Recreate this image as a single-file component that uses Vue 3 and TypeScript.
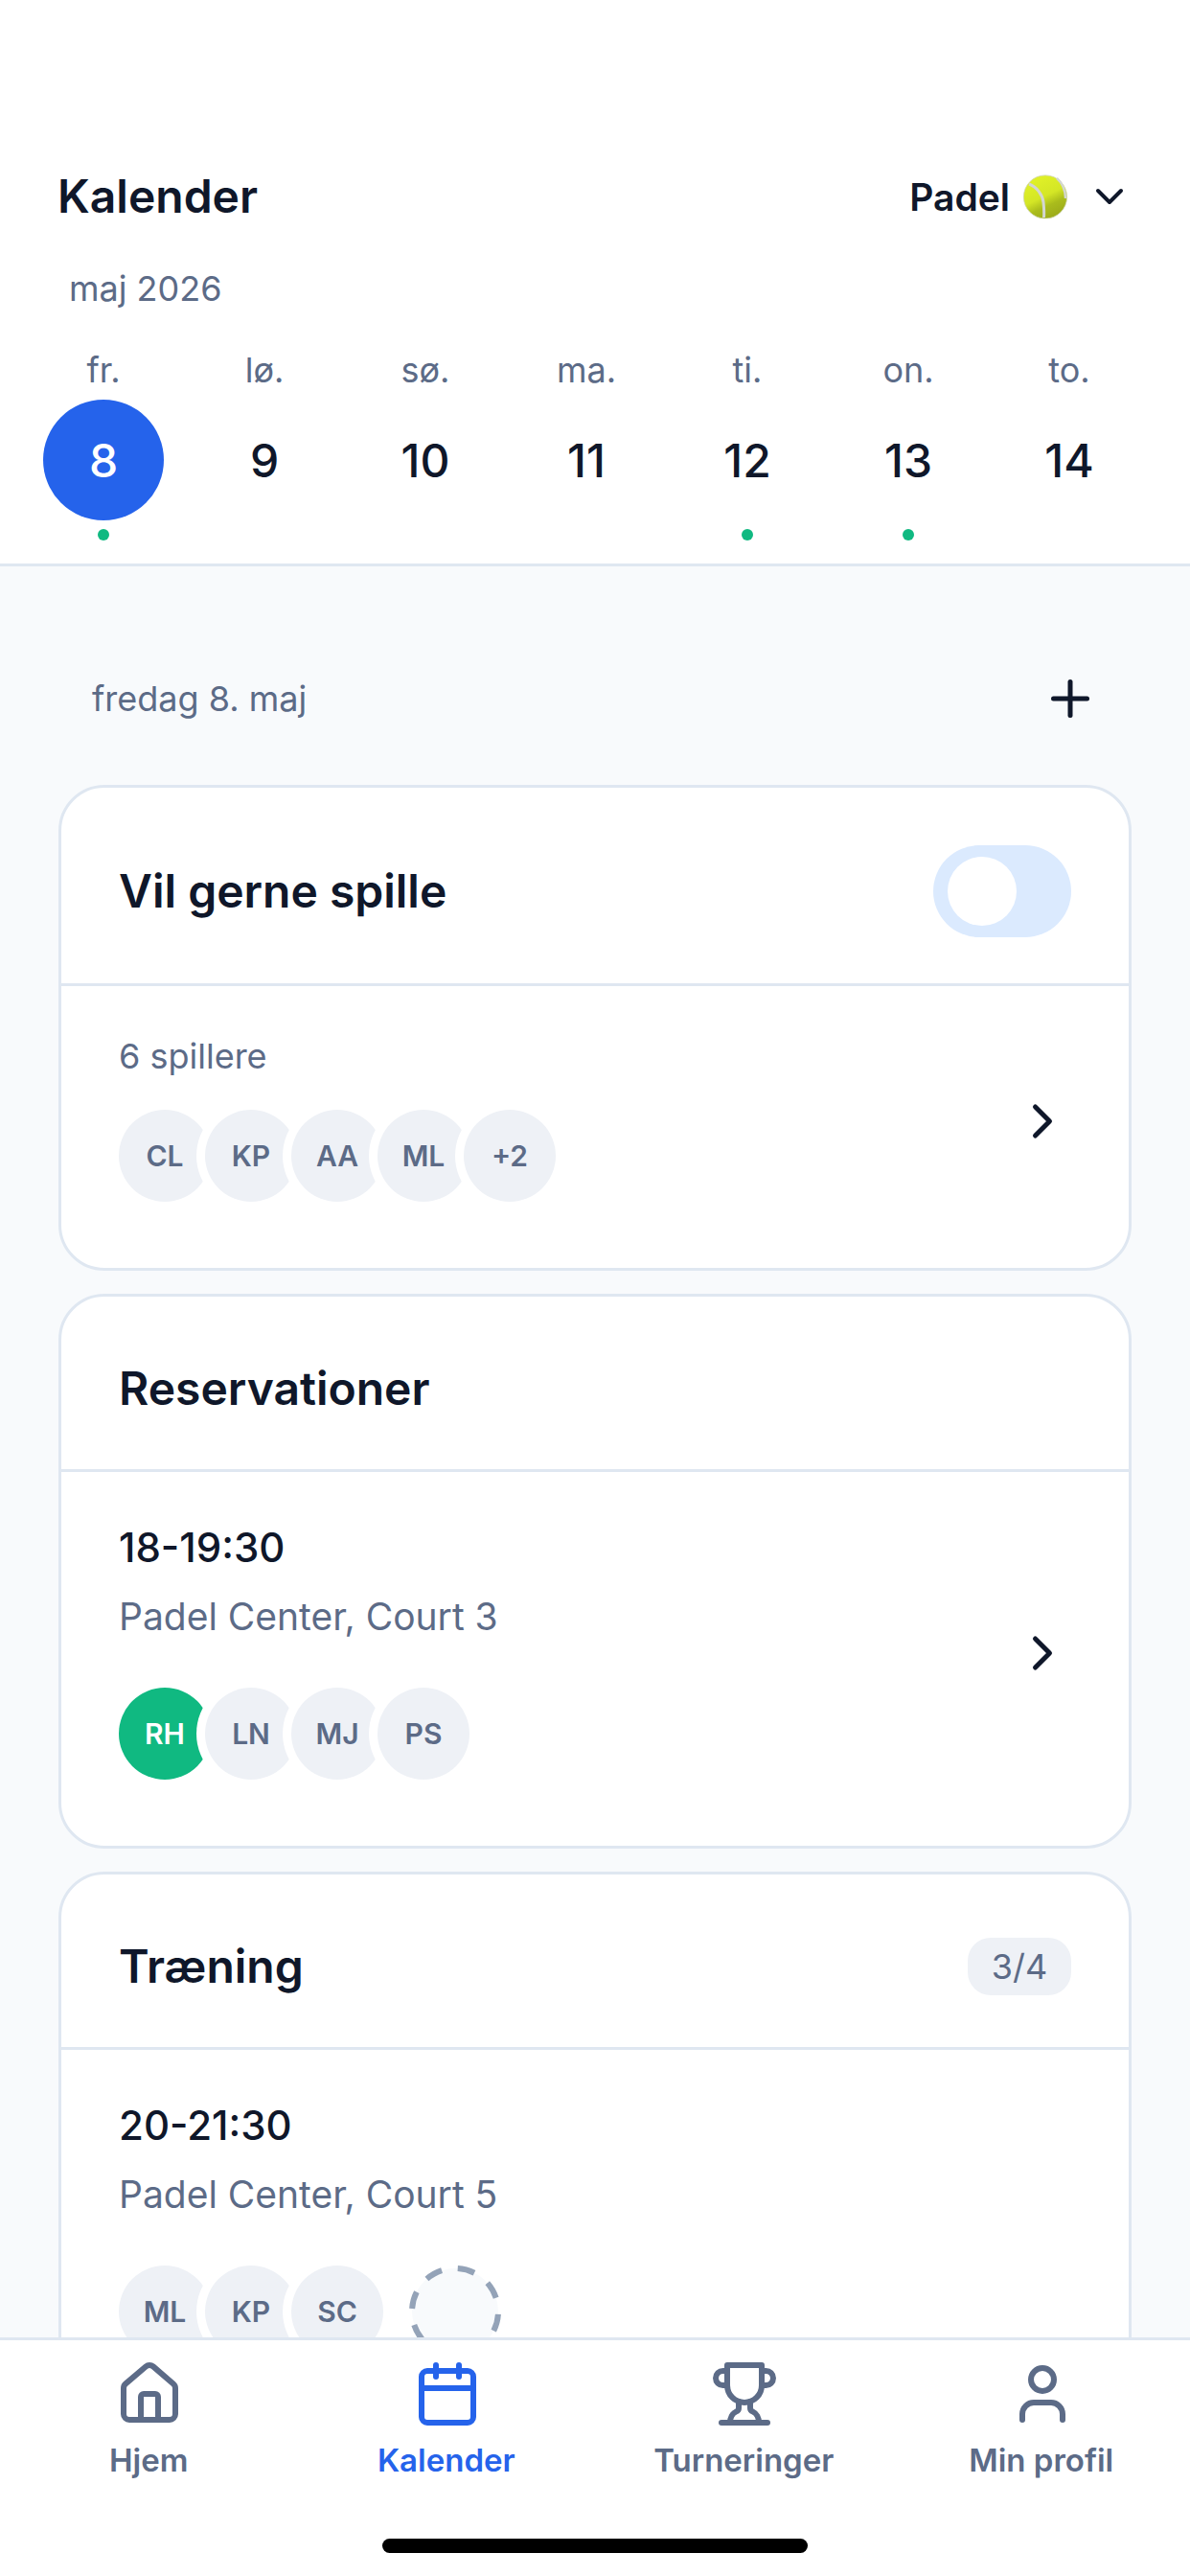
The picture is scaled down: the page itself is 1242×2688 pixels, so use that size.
<template>
  <div class="app">
    <header class="top">
      <div class="title-row">
        <h1>Kalender</h1>
        <div class="sport">
          <span>Padel</span>
          <svg class="ball" viewBox="0 0 46 46">
            <defs>
              <linearGradient id="ballFill" x1="0.3" y1="0.1" x2="0.7" y2="0.95">
                <stop offset="0" stop-color="#dff027" />
                <stop offset="0.45" stop-color="#d4e626" />
                <stop offset="0.7" stop-color="#aabc1c" />
                <stop offset="1" stop-color="#9cab1a" />
              </linearGradient>
            </defs>
            <circle cx="23" cy="23.5" r="22.6" fill="url(#ballFill)" stroke="#cfd5b0" stroke-width="0.8" />
            <path d="M6 10c8 3 14 11 15 19 .5 5 1 10 .5 16" fill="none" stroke="#d3d6d2" stroke-width="3" />
            <path d="M35 4c5 4 9 12 9 21" fill="none" stroke="#d3d6d2" stroke-width="2.4" />
          </svg>
          <svg class="chev-down" viewBox="0 0 24 24"><path d="m6 9 6 6 6-6" /></svg>
        </div>
      </div>
      <div class="month">maj 2026</div>
      <div class="days">
        <div v-for="d in days" :key="d.num" class="day">
          <div class="weekday">{{ d.label }}</div>
          <div class="num" :class="{ selected: d.selected }">{{ d.num }}</div>
          <div class="dot" :class="{ on: d.dot }"></div>
        </div>
      </div>
    </header>

    <main class="content">
      <div class="date-row">
        <span>fredag 8. maj</span>
        <svg class="plus" viewBox="0 0 24 24"><path d="M5 12h14" /><path d="M12 5v14" /></svg>
      </div>

      <section class="card">
        <div class="card-head">
          <h2>Vil gerne spille</h2>
          <div class="toggle"><div class="knob"></div></div>
        </div>
        <div class="card-body">
          <div class="body-main">
            <div class="count">6 spillere</div>
            <div class="avatars avatars-tight">
              <div v-for="a in waiting" :key="a" class="avatar">{{ a }}</div>
            </div>
          </div>
          <svg class="chev-right" viewBox="0 0 24 24"><path d="m9 18 6-6-6-6" /></svg>
        </div>
      </section>

      <section class="card">
        <div class="card-head">
          <h2>Reservationer</h2>
        </div>
        <div class="card-body">
          <div class="body-main">
            <div class="time">18-19:30</div>
            <div class="place">Padel Center, Court 3</div>
            <div class="avatars">
              <div v-for="a in booking" :key="a" class="avatar" :class="{ me: a === 'RH' }">{{ a }}</div>
            </div>
          </div>
          <svg class="chev-right" viewBox="0 0 24 24"><path d="m9 18 6-6-6-6" /></svg>
        </div>
      </section>

      <section class="card">
        <div class="card-head">
          <h2>Træning</h2>
          <div class="badge">3/4</div>
        </div>
        <div class="card-body">
          <div class="body-main">
            <div class="time">20-21:30</div>
            <div class="place">Padel Center, Court 5</div>
            <div class="avatars">
              <div v-for="a in training" :key="a" class="avatar">{{ a }}</div>
              <svg class="open-slot" viewBox="0 0 96 96">
                <circle cx="48" cy="48" r="45" transform="rotate(-86.5 48 48)" />
              </svg>
            </div>
          </div>
        </div>
      </section>
    </main>

    <nav class="tabs">
      <div class="tab-row">
        <div class="tab">
          <svg viewBox="0 0 24 24">
            <path d="M15 21v-8a1 1 0 0 0-1-1h-4a1 1 0 0 0-1 1v8" />
            <path d="M3 10a2 2 0 0 1 .709-1.528l7-6a2 2 0 0 1 2.582 0l7 6A2 2 0 0 1 21 10v9a2 2 0 0 1-2 2H5a2 2 0 0 1-2-2z" />
          </svg>
          <span>Hjem</span>
        </div>
        <div class="tab active">
          <svg viewBox="0 0 24 24">
            <path d="M8 2v4" />
            <path d="M16 2v4" />
            <rect x="3" y="4" width="18" height="18" rx="2" />
            <path d="M3 10h18" />
          </svg>
          <span>Kalender</span>
        </div>
        <div class="tab">
          <svg viewBox="0 0 24 24">
            <path d="M6 9H4.5a2.5 2.5 0 0 1 0-5H6" />
            <path d="M18 9h1.5a2.5 2.5 0 0 0 0-5H18" />
            <path d="M4 22h16" />
            <path d="M10 14.66V17c0 .55-.47.98-.97 1.21C7.85 18.75 7 20.24 7 22" />
            <path d="M14 14.66V17c0 .55.47.98.97 1.21C16.15 18.75 17 20.24 17 22" />
            <path d="M18 2H6v7a6 6 0 0 0 12 0V2Z" />
          </svg>
          <span>Turneringer</span>
        </div>
        <div class="tab">
          <svg viewBox="0 0 24 24">
            <path d="M19 21v-2a4 4 0 0 0-4-4H9a4 4 0 0 0-4 4v2" />
            <circle cx="12" cy="7" r="4" />
          </svg>
          <span>Min profil</span>
        </div>
      </div>
      <div class="home-bar"></div>
    </nav>
  </div>
</template>

<script setup lang="ts">
interface Day {
  label: string
  num: number
  selected?: boolean
  dot?: boolean
}

const days: Day[] = [
  { label: 'fr.', num: 8, selected: true, dot: true },
  { label: 'lø.', num: 9 },
  { label: 'sø.', num: 10 },
  { label: 'ma.', num: 11 },
  { label: 'ti.', num: 12, dot: true },
  { label: 'on.', num: 13, dot: true },
  { label: 'to.', num: 14 }
]

const waiting = ['CL', 'KP', 'AA', 'ML', '+2']
const booking = ['RH', 'LN', 'MJ', 'PS']
const training = ['ML', 'KP', 'SC']
</script>

<style>
html,
body {
  margin: 0;
  background: #fff;
}
</style>

<style scoped>
.app {
  width: 1242px;
  height: 2688px;
  display: flex;
  flex-direction: column;
  overflow: hidden;
  font-family: Inter, 'Liberation Sans', sans-serif;
  color: #0f172a;
  background: #f8fafc;
}

.top {
  flex: none;
  background: #fff;
  border-bottom: 3px solid #dfe7f1;
  padding-top: 169px;
  height: 591px;
  box-sizing: border-box;
}

.title-row {
  display: flex;
  justify-content: space-between;
  align-items: center;
  padding: 0 60px;
  height: 72px;
}

h1,
h2 {
  margin: 0;
  font-size: 48px;
  line-height: 72px;
  font-weight: 600;
}

.sport {
  display: flex;
  align-items: center;
  font-size: 39px;
  font-weight: 600;
}

.ball {
  width: 46px;
  height: 46px;
  margin-left: 14px;
}

.chev-down {
  width: 48px;
  height: 48px;
  margin-left: 20px;
  fill: none;
  stroke: #0f172a;
  stroke-width: 2;
  stroke-linecap: round;
  stroke-linejoin: round;
}

.month {
  margin-top: 33px;
  padding-left: 72px;
  font-size: 36px;
  line-height: 54px;
  color: #5c6b87;
}

.days {
  display: grid;
  grid-template-columns: repeat(7, 1fr);
  padding: 0 42px 0 24px;
  margin-top: 31px;
}

.day {
  display: flex;
  flex-direction: column;
  align-items: center;
}

.weekday {
  font-size: 36px;
  line-height: 54px;
  color: #5c6b87;
}

.num {
  width: 126px;
  height: 126px;
  margin-top: 4px;
  border-radius: 50%;
  display: flex;
  align-items: center;
  justify-content: center;
  font-size: 48px;
  font-weight: 450;
}

.num.selected {
  background: #2563eb;
  color: #fff;
}

.dot {
  width: 12px;
  height: 12px;
  margin-top: 9px;
  border-radius: 50%;
}

.dot.on {
  background: #10b981;
}

.content {
  flex: 1;
  min-height: 0;
  overflow: hidden;
  padding: 108px 61px 0;
}

.date-row {
  display: flex;
  justify-content: space-between;
  align-items: center;
  height: 60px;
  padding-left: 35px;
  padding-right: 34px;
  margin-bottom: 60px;
  font-size: 36px;
  color: #5c6b87;
}

.plus {
  width: 60px;
  height: 60px;
  fill: none;
  stroke: #0f172a;
  stroke-width: 2;
  stroke-linecap: round;
  stroke-linejoin: round;
}

.card {
  background: #fff;
  border: 3px solid #dfe7f1;
  border-radius: 48px;
  margin-bottom: 24px;
}

.card-head {
  display: flex;
  justify-content: space-between;
  align-items: center;
  padding: 60px 60px 48px;
  border-bottom: 3px solid #dfe7f1;
}

.toggle {
  width: 144px;
  height: 96px;
  box-sizing: border-box;
  padding: 12px 15px;
  border-radius: 48px;
  background: #dbeafe;
}

.knob {
  width: 72px;
  height: 72px;
  border-radius: 50%;
  background: #fff;
}

.badge {
  width: 108px;
  height: 60px;
  border-radius: 24px;
  background: #eef1f6;
  display: flex;
  align-items: center;
  justify-content: center;
  font-size: 36px;
  color: #5c6b87;
}

.card-body {
  display: flex;
  align-items: center;
  justify-content: space-between;
  padding: 48px 60px 60px;
}

.count {
  font-size: 36px;
  line-height: 51px;
  color: #5c6b87;
}

.time {
  font-size: 42px;
  line-height: 62px;
  font-weight: 450;
}

.place {
  margin-top: 13px;
  font-size: 39px;
  line-height: 56px;
  color: #5c6b87;
}

.avatars {
  display: flex;
  margin-top: 46px;
  padding-bottom: 9px;
}

.avatars-tight {
  margin-top: 30px;
}

.avatar {
  width: 96px;
  height: 96px;
  border-radius: 50%;
  background: #eef1f6;
  box-shadow: 0 0 0 9px #fff;
  display: flex;
  align-items: center;
  justify-content: center;
  font-size: 30px;
  font-weight: 600;
  color: #5c6b87;
}

.avatar + .avatar {
  margin-left: -6px;
}

.avatar.me {
  background: #10b981;
  color: #fff;
}

.open-slot {
  width: 96px;
  height: 96px;
  margin-left: 27px;
}

.open-slot circle {
  fill: #f8fafc;
  stroke: #94a3b8;
  stroke-width: 6;
  stroke-dasharray: 18 17.34;
}

.chev-right {
  flex: none;
  width: 60px;
  height: 60px;
  fill: none;
  stroke: #0f172a;
  stroke-width: 2;
  stroke-linecap: round;
  stroke-linejoin: round;
}

.tabs {
  flex: none;
  background: #fff;
  border-top: 3px solid #dfe7f1;
  padding-top: 20px;
}

.tab-row {
  display: flex;
}

.tab {
  flex: 1;
  display: flex;
  flex-direction: column;
  align-items: center;
  gap: 9px;
  font-size: 33px;
  line-height: 48px;
  font-weight: 600;
  color: #5c6b87;
}

.tab svg {
  width: 72px;
  height: 72px;
  margin-left: 2px;
  fill: none;
  stroke: currentColor;
  stroke-width: 2;
  stroke-linecap: round;
  stroke-linejoin: round;
}

.tab.active {
  color: #2563eb;
}

.home-bar {
  width: 444px;
  height: 15px;
  margin: 58px auto 24px;
  border-radius: 8px;
  background: #000;
}
</style>
